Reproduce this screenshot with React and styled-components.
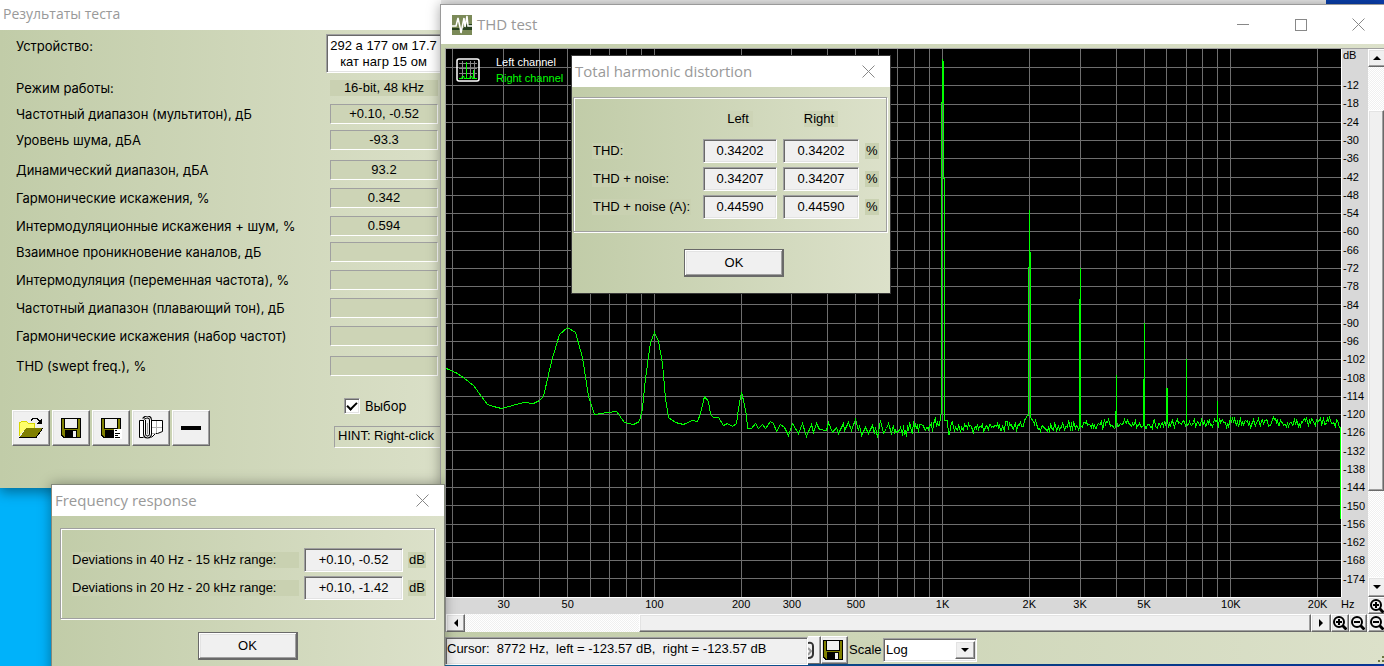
import React, { useState } from "react";
import styled, { createGlobalStyle, css } from "styled-components";

const GlobalStyle = createGlobalStyle`
  * {
    box-sizing: border-box;
  }
  body {
    margin: 0;
    overflow: hidden;
    font-family: "Liberation Sans", Arial, sans-serif;
    font-size: 13px;
    line-height: 16px;
    color: #000;
  }
  button, input, textarea, select {
    font: inherit;
    color: inherit;
    border-radius: 0;
    margin: 0;
  }
`;

const raised = css`
  background: #f0f0f0;
  border: 1px solid;
  border-color: #fff #696969 #696969 #fff;
  box-shadow: inset -1px -1px 0 #a0a0a0, inset 1px 1px 0 #e3e3e3;
`;

const sunken = css`
  border: 1px solid;
  border-color: #a0a0a0 #fff #fff #a0a0a0;
  box-shadow: inset 1px 1px 0 #696969, inset -1px -1px 0 #e3e3e3;
`;

const hatch = css`
  background: repeating-conic-gradient(#fff 0 25%, #f0f0f0 0 50%) 0 0 / 2px 2px;
`;

const Desktop = styled.main`
  position: relative;
  height: 100vh;
  overflow: hidden;
  background: linear-gradient(90deg, #00b2fa 0, #00b2fa 3%, #1a7bb5 33%, #0b4a9a 70%, #0a3fb0 100%);
`;

const Backdrop = styled.div`
  position: absolute;
  top: 0;
  left: 441px;
  right: 58px;
  height: 20px;
  background: #ebebeb;
`;

const Window = styled.section`
  position: absolute;
  display: flex;
  flex-direction: column;
  background: linear-gradient(90deg, #c1cca8 0%, #dce1ca 100%);
`;

const ResultsWindow = styled(Window)`
  top: 0;
  left: 0;
  width: 480px;
  height: 488px;
  box-shadow: 0 4px 12px rgba(0, 0, 0, 0.4);
`;

const SpectrumWindow = styled(Window)`
  top: 4px;
  left: 440px;
  right: 0;
  bottom: 2px;
  border: solid #9a9a9a;
  border-width: 1px 0 0 1px;
  box-shadow: 0 0 12px rgba(0, 0, 0, 0.35);
`;

const ResponseWindow = styled(Window)`
  top: 484px;
  left: 51px;
  width: 394px;
  height: 210px;
  border: 1px solid #83887a;
  box-shadow: 0 0 12px rgba(0, 0, 0, 0.35);
`;

const DistortionWindow = styled(Window)`
  top: 55px;
  left: 571px;
  width: 320px;
  height: 239px;
  border: 1px solid #383838;
`;

const TitleBar = styled.header`
  display: flex;
  align-items: center;
  gap: 5px;
  flex: none;
  height: ${props => props.size}px;
  padding-left: ${props => props.inset}px;
  background: #fff;
  color: #999;
  svg {
    flex: none;
  }
`;

const Title = styled.h1`
  flex: 1;
  margin: 0 0 2px;
  font-family: "Open Sans", "Noto Sans", sans-serif;
  font-size: ${props => (props.compact ? 14 : 15)}px;
  line-height: 20px;
  font-weight: 400;
`;

const Caption = styled.button`
  display: flex;
  align-items: center;
  justify-content: center;
  width: ${props => props.size}px;
  height: 100%;
  padding: 0;
  border: 0;
  background: none;
  color: #888;
`;

/* ---- test results ---- */

const ResultsBody = styled.div`
  display: flex;
  flex-direction: column;
  padding: 4px 42px 0 15px;
`;

const Row = styled.div`
  display: flex;
  align-items: center;
  justify-content: space-between;
  margin-top: ${props => props.space || 0}px;
`;

const RowLabel = styled.label`
  font-family: Inter, "Liberation Sans", sans-serif;
  padding-left: 1px;
`;

const DeviceLabel = styled(RowLabel)`
  align-self: flex-start;
  margin-top: 4px;
`;

const Device = styled.textarea`
  ${sunken}
  display: block;
  width: 118px;
  height: 39px;
  margin-right: -6px;
  padding: 3px 5px 2px 2px;
  background: #fff;
  text-align: center;
  resize: none;
  overflow: hidden;
`;

const SideValue = styled.output`
  width: 108px;
  background: #cad1b2;
  text-align: center;
`;

const Value = styled.output`
  width: 108px;
  height: 20px;
  border: 1px solid;
  border-color: #a0a0a0 #fff #fff #a0a0a0;
  background: #cdd4b6;
  text-align: center;
  line-height: 17px;
`;

const Footer = styled.div`
  display: flex;
  justify-content: space-between;
  margin: 22px -42px 0 -3px;
`;

const Tools = styled.div`
  display: flex;
  gap: 2px;
  margin-top: 12px;
`;

const ToolButton = styled.button`
  ${raised}
  display: flex;
  align-items: center;
  justify-content: center;
  width: 38px;
  height: 36px;
  padding: 0;
`;

const Side = styled.div`
  display: flex;
  flex-direction: column;
  width: 146px;
`;

const CheckLabel = styled.label`
  display: flex;
  align-items: center;
  gap: 5px;
  padding-left: 10px;
  font-family: Inter, "Liberation Sans", sans-serif;
`;

const CheckBox = styled.input`
  ${sunken}
  appearance: none;
  display: grid;
  place-items: center;
  width: 16px;
  height: 16px;
  background: #fff;
  &:checked::after {
    content: "";
    width: 8px;
    height: 4px;
    margin-top: -3px;
    border: solid #000;
    border-width: 0 0 2px 2px;
    transform: rotate(-45deg);
  }
`;

const Hint = styled.div`
  height: 22px;
  margin-top: 12px;
  padding-left: 3px;
  border: 1px solid;
  border-color: #a0a0a0 #fff #fff #a0a0a0;
  line-height: 18px;
  white-space: nowrap;
`;

/* ---- dialogs ---- */

const DialogBody = styled.div`
  display: flex;
  flex-direction: column;
  padding: ${props => props.pad};
`;

const Group = styled.fieldset`
  display: grid;
  align-items: center;
  width: 100%;
  min-width: 0;
  margin: 0;
  border: 1px solid #a0a0a0;
  box-shadow: 1px 1px 0 #fff, inset 1px 1px 0 #fff;
`;

const ResponseGroup = styled(Group)`
  grid-template-columns: 227px 99px 20px;
  grid-auto-rows: 24px;
  gap: 4px 5px;
  padding: 19px 0 18px 11px;
`;

const DistortionGroup = styled(Group)`
  grid-template-columns: 105px 74px 76px 16px;
  grid-auto-rows: 24px;
  gap: 4px 6px;
  padding: 13px 0 12px 18px;
`;

const Tag = styled.label`
  justify-self: start;
  padding: 0 1px;
  background: #c9d1b1;
  white-space: nowrap;
`;

const WideTag = styled(Tag)`
  width: 100%;
  padding: 0;
`;

const Heading = styled.span`
  padding: 0 4px 0 0;
  align-self: start;
  justify-self: center;
  background: #cdd4b6;
`;

const Field = styled.input`
  ${sunken}
  width: 100%;
  height: 24px;
  padding: 0 1px 2px;
  background: #f0f0f0;
  text-align: center;
`;

const Actions = styled.div`
  display: flex;
  justify-content: center;
  padding: ${props => props.pad};
`;

const OkButton = styled.button`
  ${raised}
  width: 100px;
  height: 28px;
  padding: 0;
  border-color: #696969;
  box-shadow: inset -1px -1px 0 #696969, inset 1px 1px 0 #fff,
    inset -2px -2px 0 #a0a0a0, inset 2px 2px 0 #e3e3e3;
`;

/* ---- spectrum ---- */

const SpectrumBody = styled.div`
  flex: 1;
  min-height: 0;
  display: grid;
  grid-template-columns: 1fr 27px 16px;
  grid-template-rows: 1fr 17px 18px;
  margin: 4px 0 0 4px;
  border: solid #a0a0a0;
  border-width: 1px 0 0 1px;
`;

const Plot = styled.div`
  position: relative;
  min-height: 0;
  background: #000;
`;

const Canvas = styled.svg`
  display: block;
  width: 100%;
  height: 100%;
`;

const Legend = styled.div`
  position: absolute;
  top: 5px;
  left: 10px;
  display: flex;
  align-items: center;
  gap: 16px;
  font-size: 11px;
  color: #fff;
  p {
    margin: 0;
  }
  p + p {
    color: #0f0;
  }
`;

const LevelAxis = styled.div`
  display: flex;
  flex-direction: column;
  padding: 0 0 9px 1px;
  border-left: 1px solid #fff;
  background: #d8d8d8;
  font-size: 11px;
  line-height: 12px;
`;

const Unit = styled.span`
  flex: none;
  height: 27px;
`;

const Level = styled.span`
  flex: 1;
  display: flex;
  align-items: center;
`;

const FrequencyAxis = styled.div`
  position: relative;
  grid-column: 1;
  border-top: 1px solid #fff;
  background: #d8d8d8;
  font-size: 11px;
  line-height: 13px;
`;

const Frequency = styled.span`
  position: absolute;
  transform: translateX(-50%);
`;

const AxisCorner = styled.div`
  background: #d8d8d8;
  font-size: 11px;
  line-height: 15px;
`;

const VerticalScroll = styled.div`
  display: flex;
  flex-direction: column;
  overflow: hidden;
  ${hatch}
`;

const HorizontalScroll = styled.div`
  grid-column: 1 / 3;
  display: flex;
  min-width: 0;
  padding-right: 1px;
  ${hatch}
`;

const Spacer = styled.div`
  flex: ${props => props.grow} 0 0;
`;

const Thumb = styled.div`
  ${raised}
  flex: ${props => props.grow} 0 0;
`;

const ScrollButton = styled.button`
  ${raised}
  flex: none;
  display: flex;
  align-items: center;
  justify-content: center;
  width: ${props => props.w || 18}px;
  height: ${props => props.h || 18}px;
  padding: 0;
  overflow: hidden;
`;

const StatusBar = styled.footer`
  display: flex;
  align-items: flex-start;
  flex: none;
  height: 32px;
  padding: 4px 0 0 4px;
`;

const Cursor = styled.output`
  ${sunken}
  width: 363px;
  height: 28px;
  margin-top: 1px;
  padding: 2px 1px;
  line-height: 18px;
  background: #f0f0f0;
  white-space: pre;
`;

const ClipButton = styled(ToolButton)`
  width: 13px;
  height: 28px;
  border-left: 0;
  box-shadow: inset -1px 0 0 #a0a0a0;
  justify-content: flex-start;
  overflow: hidden;
`;

const SaveButton = styled(ToolButton)`
  width: 27px;
  height: 28px;
  justify-content: flex-start;
`;

const ScaleLabel = styled.label`
  height: 16px;
  margin-top: 6px;
  padding-left: 1px;
  width: 35px;
  background: #cdd4b6;
`;

const SelectBox = styled.div`
  ${sunken}
  display: flex;
  position: relative;
  width: 94px;
  height: 24px;
  margin-top: 2px;
  padding: 2px 1px 2px 2px;
  background: #fff;
`;

const Select = styled.select`
  flex: 1;
  appearance: none;
  border: 0;
  padding: 0;
  background: none;
`;

const Arrow = styled.span`
  ${raised}
  width: 20px;
  display: grid;
  place-items: center;
  pointer-events: none;
`;

const Grip = styled.div`
  margin: 20px 0 0 auto;
  line-height: 0;
`;

/* ---- icons ---- */

const Cross = () => (
  <svg width="13" height="13" viewBox="0 0 13 13" stroke="currentColor">
    <path d="M0.5 0.5L12.5 12.5M12.5 0.5L0.5 12.5" />
  </svg>
);

const AppIcon = () => (
  <svg width="20" height="20" viewBox="0 0 20 20">
    <rect width="20" height="20" fill="#7b8a58" />
    <rect y="13" width="20" height="2" fill="#26401d" />
    <rect x="12" y="9" width="8" height="5" fill="#26401d" />
    <path
      d="M0 11h4l2-8 2 9 1 6 3-15 1 9 2-11 1 10h4"
      fill="none"
      stroke="#fff"
      strokeWidth="1.5"
    />
  </svg>
);

const OpenIcon = () => (
  <svg width="26" height="24" viewBox="0 0 26 24" shapeRendering="crispEdges">
    <path d="M1 20V7l2-2h5l2 2h7v5H8z" fill="#ffff6a" />
    <path d="M1.500 20V7L3.500 5.500h5l2 2h6V12" fill="none" stroke="#d8d800" />
    <path d="M2 21L8 12h17l-7 9z" fill="#808000" />
    <path d="M1 21.500h17l7-9.500" fill="none" stroke="#000" />
    <path d="M13 4.500l2-2h4l4 4" fill="none" stroke="#000" />
    <path d="M24 2v6h-6z" />
  </svg>
);

const SaveIcon = ({ list }) => (
  <svg width="22" height="22" viewBox="0 0 22 22" shapeRendering="crispEdges">
    <path d="M1 1h20v20H3l-2-2z" fill="#000" />
    <path d="M2 2h18v18H4l-2-2z" fill="#808000" />
    <path d="M4 1h14v11H4z" fill="#000" />
    <path d="M5 2h12v9H5z" fill="#f0f0f0" />
    <path d="M5 13h12v8H5z" fill="#000" />
    {list ? (
      <>
        <path d="M14 12h8v10h-8z" fill="#fff" />
        <path d="M15 13.500h2M15 16.500h5M15 18.500h3M15 20.500h5" stroke="#000" />
      </>
    ) : (
      <path d="M13 14h3v6h-3z" fill="#f0f0f0" />
    )}
  </svg>
);

const ClipIcon = () => (
  <svg width="26" height="24" viewBox="0 0 26 24" fill="none">
    <path d="M12.500 4.500h12v11l-5 2h-2l-4 4" fill="#fff" stroke="#000" />
    <path d="M5.500 4.500h-4v17h4" fill="#fff" stroke="#000" />
    <path d="M13 11.500h11M13 17.500h5M18.500 5v12" stroke="#b0b0b0" />
    <path d="M6.500 4v14q0 3 3 3t3-3V4q0-3-3-3T5.500 3" stroke="#000" strokeWidth="3" />
    <path d="M6.500 4v14q0 3 3 3t3-3V4q0-3-3-3T5.500 3" stroke="#fff" />
    <path d="M9.500 7v11" stroke="#999" />
  </svg>
);

const MinusIcon = () => (
  <svg width="20" height="4" viewBox="0 0 20 4">
    <path d="M0 0h20v4H0z" />
  </svg>
);

const Triangle = ({ turn = 0 }) => (
  <svg width="8" height="8" viewBox="0 0 8 8">
    <path d="M0 2h8L4 6z" transform={`rotate(${turn} 4 4)`} />
  </svg>
);

const ZoomIcon = ({ plus }) => (
  <svg width="14" height="14" viewBox="0 0 14 14" fill="none" stroke="#000" strokeWidth="2">
    <circle cx="6" cy="6" r="5" />
    <path d={plus ? "M3 6h6M6 3v6" : "M3 6h6"} />
    <path d="M9.500 9.500L13.500 13.500" strokeWidth="3" />
  </svg>
);

const SpectrumIcon = () => (
  <svg width="24" height="24" viewBox="0 0 24 24" fill="none">
    <rect x="1" y="1" width="22" height="22" rx="2" stroke="#fff" strokeWidth="1.500" />
    <path d="M6.500 3v18M14.500 3v18M18.500 3v18M3 5.500h18M3 10.500h18M3 15.500h18" stroke="#888" />
    <path
      d="M3 20.500h3v-2h2v2h2.500V4v16.500H14v-2h2v2h1.500V12v8.500H21"
      stroke="#0f0"
    />
  </svg>
);

/* ---- chart data ---- */

const PLOT_WIDTH = 895;
const PLOT_HEIGHT = 548;

const frequencyToX = f => 208.4 + 288.2 * Math.log10(f / 100);

const gridFrequencies = [];
for (let decade = 10; decade <= 10000; decade *= 10) {
  for (let n = 1; n < 10; n++) {
    const f = decade * n;
    if (f >= 20 && f <= 20000) gridFrequencies.push(f);
  }
}

const gridLevels = Array.from({ length: 29 }, (_, i) => Math.floor(18.5 + 18.26 * i));
const levels = Array.from({ length: 28 }, (_, i) => -12 - i * 6);

const frequencies = [
  [30, "30"], [50, "50"], [100, "100"], [200, "200"], [300, "300"], [500, "500"],
  [1000, "1K"], [2000, "2K"], [3000, "3K"], [5000, "5K"], [10000, "10K"], [20000, "20K"]
];

const lowBand = [
  [0, 319], [11, 324], [18, 329], [27, 336], [35, 347], [41, 355], [47, 357], [55, 359],
  [66, 356], [77, 353], [87, 354], [93, 351], [97, 347], [105, 312], [113, 285], [121, 278],
  [129, 283], [136, 308], [142, 347], [148, 365], [161, 363], [170, 362], [178, 373],
  [187, 375], [193, 372], [196, 359], [199, 329], [204, 293], [208, 283], [212, 292],
  [216, 314], [219, 349], [222, 368], [229, 373], [237, 375], [246, 371], [251, 372],
  [254, 364], [258, 347], [262, 352], [264, 365], [267, 368], [272, 368], [277, 376],
  [281, 374], [286, 377], [290, 374], [292, 359], [295, 343], [297, 351], [300, 366],
  [301, 379], [305, 379], [309, 374], [312, 379], [316, 375], [319, 379], [324, 372],
  [327, 374], [330, 382], [334, 375], [338, 378], [342, 386], [346, 374], [352, 384],
  [356, 374], [360, 387], [365, 375], [367, 383], [370, 374], [373, 380], [380, 381],
  [382, 373], [386, 383], [390, 378], [392, 384], [397, 374], [398, 381], [402, 373],
  [405, 381], [409, 370], [412, 381], [413, 376], [415, 386], [419, 378], [422, 384],
  [426, 376], [428, 384], [429, 378], [431, 388], [434, 371], [437, 384], [440, 379],
  [442, 374], [445, 384]
];

// harmonics: x -> points of the peak
const peaks = {
  494: [[494, 368], [495, 362], [495, 53], [496, 53], [496, 10], [497, 13], [497, 129], [498, 129], [498, 371], [501, 371]],
  578: [[578, 371], [581, 366], [582, 366], [582, 218], [583, 218], [583, 160], [583, 203], [584, 203], [584, 368], [587, 372]],
  633: [[633, 378], [633, 250], [634, 250], [634, 218], [634, 377]],
  669: [[669, 378], [669, 362], [670, 362], [670, 325], [670, 369], [671, 377]],
  697: [[697, 376], [697, 330], [698, 330], [698, 273], [698, 375]],
  720: [[720, 370], [720, 339], [721, 339], [721, 370]],
  740: [[740, 373], [740, 309], [740, 374]],
  771: [[771, 373], [771, 351], [771, 375]]
};

const buildTrace = () => {
  const points = [...lowBand];
  let seed = 7;
  const random = () => {
    seed = (seed * 16807) % 2147483647;
    return seed / 2147483647;
  };
  let x = 446;
  while (x < 892) {
    if (peaks[x]) {
      points.push(...peaks[x]);
      x = points[points.length - 1][0] + 1;
      continue;
    }
    let base = 375;
    let spread = 4;
    if (x < 495) {
      base = 381 - (x - 446) / 8;
      spread = 6;
    } else if (x < 520) {
      base = 379;
      spread = 5;
    } else if (x < 634) {
      base = 377;
    } else if (x > 740) {
      base = 373;
    }
    points.push([x, Math.round(base + (random() + random() - 1) * spread * 1.5)]);
    x += 1;
  }
  points.push([893, 378], [894, 378], [894, 469]);
  return points.map(([px, py]) => `${px + 0.5},${py + 0.5}`).join(" ");
};

const trace = buildTrace();

const results = [
  { label: "Частотный диапазон (мультитон), дБ", value: "+0.10, -0.52", space: 8 },
  { label: "Уровень шума, дБА", value: "-93.3", space: 6 },
  { label: "Динамический диапазон, дБА", value: "93.2", space: 10 },
  { label: "Гармонические искажения, %", value: "0.342", space: 8 },
  { label: "Интермодуляционные искажения + шум, %", value: "0.594", space: 8 },
  { label: "Взаимное проникновение каналов, дБ", value: "", space: 6 },
  { label: "Интермодуляция (переменная частота), %", value: "", space: 8 },
  { label: "Частотный диапазон (плавающий тон), дБ", value: "", space: 8 },
  { label: "Гармонические искажения (набор частот)", value: "", space: 8 },
  { label: "THD (swept freq.), %", value: "", space: 10 }
];

const distortion = [
  ["THD:", "0.34202"],
  ["THD + noise:", "0.34207"],
  ["THD + noise (A):", "0.44590"]
];

const deviations = [
  ["Deviations in 40 Hz - 15 kHz range:", "+0.10, -0.52"],
  ["Deviations in 20 Hz - 20 kHz range:", "+0.10, -1.42"]
];

const Results = () => {
  const [checked, setChecked] = useState(true);
  return (
    <ResultsWindow>
      <TitleBar size={30} inset={3}>
        <Title compact>Результаты теста</Title>
      </TitleBar>
      <ResultsBody>
        <Row>
          <DeviceLabel htmlFor="device">Устройство:</DeviceLabel>
          <Device id="device" defaultValue={"292 а 177 ом 17.7\nкат нагр 15 ом"} />
        </Row>
        <Row space={7}>
          <RowLabel htmlFor="mode">Режим работы:</RowLabel>
          <SideValue id="mode">16-bit, 48 kHz</SideValue>
        </Row>
        {results.map((row, i) => (
          <Row key={row.label} space={row.space}>
            <RowLabel htmlFor={`result-${i}`}>{row.label}</RowLabel>
            <Value id={`result-${i}`}>{row.value}</Value>
          </Row>
        ))}
        <Footer>
          <Tools>
            <ToolButton aria-label="Open"><OpenIcon /></ToolButton>
            <ToolButton aria-label="Save"><SaveIcon /></ToolButton>
            <ToolButton aria-label="Save report"><SaveIcon list /></ToolButton>
            <ToolButton aria-label="Attach"><ClipIcon /></ToolButton>
            <ToolButton aria-label="Remove"><MinusIcon /></ToolButton>
          </Tools>
          <Side>
            <CheckLabel>
              <CheckBox
                type="checkbox"
                checked={checked}
                onChange={() => setChecked(!checked)}
              />
              Выбор
            </CheckLabel>
            <Hint>HINT: Right-click</Hint>
          </Side>
        </Footer>
      </ResultsBody>
    </ResultsWindow>
  );
};

const Chart = () => (
  <Plot>
    <Canvas
      viewBox={`0 0 ${PLOT_WIDTH} ${PLOT_HEIGHT}`}
      preserveAspectRatio="none"
      shapeRendering="crispEdges"
      fill="none"
    >
      <g stroke="#6e6e6e">
        {gridFrequencies.map(f => {
          const x = Math.floor(frequencyToX(f)) + 0.5;
          return <line key={f} x1={x} x2={x} y1="0" y2={PLOT_HEIGHT} />;
        })}
        {gridLevels.map(y => (
          <line key={y} x1="0" x2={PLOT_WIDTH} y1={y + 0.5} y2={y + 0.5} />
        ))}
      </g>
      <polyline points={trace} stroke="#0f0" />
    </Canvas>
    <Legend>
      <SpectrumIcon />
      <div>
        <p>Left channel</p>
        <p>Right channel</p>
      </div>
    </Legend>
  </Plot>
);

const Spectrum = () => (
  <SpectrumWindow>
    <TitleBar size={39} inset={11}>
      <AppIcon />
      <Title>THD test</Title>
      <Caption size={53} aria-label="Minimize">
        <svg width="12" height="13" stroke="currentColor"><path d="M0 6.500h12" /></svg>
      </Caption>
      <Caption size={53} aria-label="Maximize">
        <svg width="12" height="12" stroke="currentColor" fill="none">
          <rect x="0.500" y="0.500" width="11" height="11" />
        </svg>
      </Caption>
      <Caption size={52} aria-label="Close"><Cross /></Caption>
    </TitleBar>
    <SpectrumBody>
      <Chart />
      <LevelAxis>
        <Unit>dB</Unit>
        {levels.map(level => <Level key={level}>{level}</Level>)}
      </LevelAxis>
      <VerticalScroll>
        <ScrollButton aria-label="Scroll up"><Triangle turn={180} /></ScrollButton>
        <Spacer grow={43} />
        <Thumb grow={379} />
        <Spacer grow={86} />
        <ScrollButton aria-label="Scroll down" h={20}><Triangle /></ScrollButton>
      </VerticalScroll>
      <FrequencyAxis>
        {frequencies.map(([f, text]) => (
          <Frequency key={f} style={{ left: `${(frequencyToX(f) / PLOT_WIDTH) * 100}%` }}>
            {text}
          </Frequency>
        ))}
      </FrequencyAxis>
      <AxisCorner>Hz</AxisCorner>
      <ScrollButton aria-label="Zoom in level" h={17}><ZoomIcon plus /></ScrollButton>
      <HorizontalScroll>
        <ScrollButton aria-label="Scroll left" w={19}><Triangle turn={90} /></ScrollButton>
        <Spacer grow={174} />
        <Thumb grow={671} />
        <ScrollButton aria-label="Scroll right" w={20}><Triangle turn={270} /></ScrollButton>
        <ScrollButton aria-label="Zoom in"><ZoomIcon plus /></ScrollButton>
        <ScrollButton aria-label="Zoom out"><ZoomIcon /></ScrollButton>
      </HorizontalScroll>
      <ScrollButton aria-label="Zoom out level"><ZoomIcon /></ScrollButton>
    </SpectrumBody>
    <StatusBar>
      <Cursor>Cursor:  8772 Hz,  left = -123.57 dB,  right = -123.57 dB</Cursor>
      <ClipButton aria-label="Attach">
        <svg width="7" height="18" viewBox="0 0 7 18" fill="none">
          <path d="M0 2q5-1 5 3v8q0 4-5 4" stroke="#333" strokeWidth="2" />
          <path d="M0 7l3 3-3 4" stroke="#999" strokeWidth="2" />
        </svg>
      </ClipButton>
      <SaveButton aria-label="Save"><SaveIcon /></SaveButton>
      <ScaleLabel htmlFor="scale">Scale</ScaleLabel>
      <SelectBox>
        <Select id="scale" defaultValue="Log">
          <option>Log</option>
          <option>Linear</option>
        </Select>
        <Arrow><Triangle /></Arrow>
      </SelectBox>
      <Grip>
        <svg width="6" height="7" viewBox="0 0 6 7" fill="#6b7340">
          <path d="M4 0h2v2H4zM0 4h2v2H0zM4 4h2v2H4z" />
        </svg>
      </Grip>
    </StatusBar>
  </SpectrumWindow>
);

const Distortion = () => (
  <DistortionWindow>
    <TitleBar size={31} inset={3}>
      <Title>Total harmonic distortion</Title>
      <Caption size={43} aria-label="Close"><Cross /></Caption>
    </TitleBar>
    <DialogBody pad="10px 3px 0 1px">
      <DistortionGroup>
        <span />
        <Heading>Left</Heading>
        <Heading>Right</Heading>
        <span />
        {distortion.map(([label, value], i) => (
          <React.Fragment key={label}>
            <Tag htmlFor={`thd-left-${i}`}>{label}</Tag>
            <Field id={`thd-left-${i}`} value={value} readOnly />
            <Field aria-label={`${label} right`} value={value} readOnly />
            <Tag as="span">%</Tag>
          </React.Fragment>
        ))}
      </DistortionGroup>
      <Actions pad="17px 0 0 8px">
        <OkButton>OK</OkButton>
      </Actions>
    </DialogBody>
  </DistortionWindow>
);

const Response = () => (
  <ResponseWindow>
    <TitleBar size={31} inset={3}>
      <Title>Frequency response</Title>
      <Caption size={43} aria-label="Close"><Cross /></Caption>
    </TitleBar>
    <DialogBody pad="12px 9px 0 8px">
      <ResponseGroup>
        {deviations.map(([label, value], i) => (
          <React.Fragment key={label}>
            <WideTag htmlFor={`deviation-${i}`}>{label}</WideTag>
            <Field id={`deviation-${i}`} value={value} readOnly />
            <Tag as="span">dB</Tag>
          </React.Fragment>
        ))}
      </ResponseGroup>
      <Actions pad="13px 0 0">
        <OkButton>OK</OkButton>
      </Actions>
    </DialogBody>
  </ResponseWindow>
);

export default function App() {
  return (
    <Desktop>
      <GlobalStyle />
      <Results />
      <Backdrop />
      <Spectrum />
      <Distortion />
      <Response />
    </Desktop>
  );
}
